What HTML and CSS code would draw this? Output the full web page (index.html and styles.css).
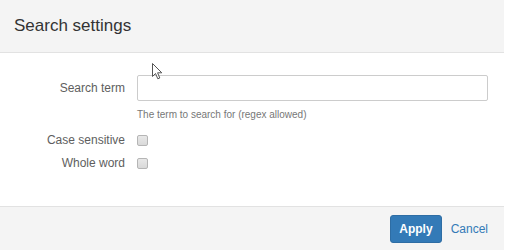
FILE: index.html
```html
<!DOCTYPE html>
<html>
<head>
<meta charset="utf-8">
<link rel="stylesheet" href="styles.css">
</head>
<body>
<div class="dialog">
  <div class="header">
    <h4 class="title">Search settings</h4>
  </div>
  <div class="body">
    <div class="form">
      <label class="label label-input">Search term</label>
      <div class="control">
        <div class="input"></div>
        <div class="help">The term to search for (regex allowed)</div>
      </div>
      <label class="label label-check">Case sensitive</label>
      <div class="control check-row"><span class="check"></span></div>
      <label class="label label-check">Whole word</label>
      <div class="control check-row"><span class="check"></span></div>
    </div>
  </div>
  <div class="footer">
    <button class="btn-apply">Apply</button>
    <span class="cancel">Cancel</span>
  </div>
  <svg class="cursor" width="12" height="18" viewBox="0 0 12 18"><path d="M0.5 0.5 L0.5 13.5 L3.5 10.5 L5.8 15.8 L7.8 15 L5.6 9.8 L9.8 9.8 Z" fill="#fff" stroke="#555" stroke-width="1"/></svg>
</div>
</body>
</html>
```
FILE: styles.css
```css
html, body {
  margin: 0;
  padding: 0;
  background: #fff;
}
body {
  font-family: "Liberation Sans", Arial, sans-serif;
  color: #333;
}
.dialog {
  position: relative;
  width: 504px;
  height: 250px;
  display: flex;
  flex-direction: column;
}
.header {
  height: 52px;
  background: #f4f4f4;
  border-bottom: 1px solid #e2e2e2;
  display: flex;
  align-items: center;
  padding-left: 14px;
}
.title {
  margin: 0;
  font-size: 17px;
  font-weight: normal;
  color: #333;
}
.body {
  flex: 1;
  padding: 22px 16px 0 0;
}
.form {
  display: grid;
  grid-template-columns: 125px 1fr;
  column-gap: 12px;
  row-gap: 0;
}
.label {
  text-align: right;
  font-size: 12px;
  color: #5e5e5e;
}
.label-input {
  line-height: 26px;
}
.label-check {
  line-height: 23px;
}
.input {
  height: 24px;
  border: 1px solid #ccc;
  border-radius: 2px;
  background: #fff;
}
.help {
  font-size: 10px;
  color: #777;
  margin-top: 8px;
  margin-bottom: 9px;
}
.check-row {
  display: flex;
  align-items: center;
  height: 23px;
}
.check {
  width: 9px;
  height: 9px;
  border: 1px solid #b5b5b5;
  border-radius: 2px;
  background: linear-gradient(#e8e8e8, #d9d9d9);
}
.footer {
  height: 43px;
  background: #f4f4f4;
  border-top: 1px solid #e2e2e2;
  display: flex;
  align-items: center;
  justify-content: flex-end;
  padding-right: 16px;
  gap: 9px;
}
.btn-apply {
  font-family: "Liberation Sans", Arial, sans-serif;
  font-size: 12px;
  font-weight: bold;
  color: #fff;
  background: #337ab7;
  border: 1px solid #2e6da4;
  border-radius: 3px;
  height: 28px;
  padding: 0 8px;
}
.cancel {
  font-size: 12px;
  color: #337ab7;
}
.cursor {
  position: absolute;
  left: 152px;
  top: 63px;
}
```
